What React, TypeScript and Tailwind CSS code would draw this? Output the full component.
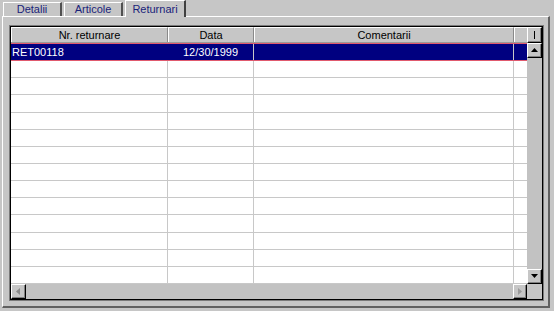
import React from 'react';

const rows = [
  { nr: 'RET00118', data: '12/30/1999', com: '' },
  ...Array.from({ length: 13 }, () => ({ nr: '', data: '', com: '' })),
];

// raised win98 style button face
function SysButton({ children, className = '' }: { children?: React.ReactNode; className?: string }) {
  return (
    <div className={`border-t border-l border-white border-r border-b border-r-black border-b-black bg-[#c6c6c6] ${className}`}>
      <div className="w-full h-full border-r border-b border-[#808080] flex items-center justify-center">
        {children}
      </div>
    </div>
  );
}

function Tab({ label, active }: { label: string; active?: boolean }) {
  if (active) {
    return (
      <div className="relative z-10 -mb-px h-[17px] w-[61px] bg-[#c6c6c6] border-t border-l border-white border-r-2 border-r-[#404040] flex items-center justify-center text-[#1a237a]">
        {label}
      </div>
    );
  }
  return (
    <div className="h-[14px] w-[59px] bg-[#c6c6c6] border-t border-l border-white border-r-2 border-r-[#505050] flex items-center justify-center text-[#1a237a]">
      {label}
    </div>
  );
}

export default function App() {
  return (
    <div
      className="w-[554px] h-[311px] bg-[#c6c6c6] overflow-hidden text-[11px] leading-none"
      style={{ fontFamily: '"Liberation Sans", Arial, sans-serif' }}
    >
      {/* tab strip */}
      <div className="flex items-end h-[16px] pl-[3px] gap-[2px]">
        <Tab label="Detalii" />
        <Tab label="Articole" />
        <Tab label="Returnari" active />
      </div>

      {/* tab page */}
      <div className="ml-[2px] w-[548px] h-[292px] border-t border-l border-white border-r-2 border-b-2 border-r-[#606060] border-b-[#606060] pt-[8px] pl-[6px]">
        {/* grid frame */}
        <div className="w-[535px] h-[276px] border border-[#7a7a7a]">
          <div className="w-full h-full border border-black flex flex-col bg-[#c6c6c6]">
            <div className="flex h-[258px]">
              {/* table */}
              <div className="flex-1 flex flex-col bg-white">
                <div className="flex h-[16px] bg-[#c6c6c6] border-b border-[#9a9a9a] text-black">
                  <div className="w-[157px] border-l border-t border-white border-r border-r-[#8a8a8a] flex items-center justify-center">Nr. returnare</div>
                  <div className="w-[86px] border-l border-t border-white border-r border-r-[#8a8a8a] flex items-center justify-center">Data</div>
                  <div className="w-[260px] border-l border-t border-white border-r border-r-[#8a8a8a] flex items-center justify-center">Comentarii</div>
                  <div className="flex-1 border-l border-t border-white" />
                </div>
                {rows.map((r, i) => {
                  const sel = i === 0;
                  return (
                    <div
                      key={i}
                      className={`flex flex-1 ${sel ? 'bg-[#000080] text-white border-y border-[#e05a6e]' : 'border-b border-[#c8c8c8]'}`}
                    >
                      <div className={`w-[157px] border-r ${sel ? 'border-[#000080]' : 'border-[#c8c8c8]'} flex items-center pl-[1px]`}>{r.nr}</div>
                      <div className="w-[86px] border-r border-[#c8c8c8] flex items-center justify-center">{r.data}</div>
                      <div className="w-[260px] border-r border-[#c8c8c8] flex items-center">{r.com}</div>
                      <div className="flex-1" />
                    </div>
                  );
                })}
              </div>
              {/* vertical scrollbar */}
              <div className="w-[15px] flex flex-col bg-[#c6c6c6]">
                <SysButton className="h-[16px]">
                  <div className="w-[1px] h-[8px] bg-black" />
                </SysButton>
                <SysButton className="h-[15px]">
                  <svg width="7" height="4" viewBox="0 0 7 4"><path d="M3.5 0L7 4H0z" fill="#000" /></svg>
                </SysButton>
                <div className="flex-1 bg-[#c2c2c2]" />
                <SysButton className="h-[15px]">
                  <svg width="7" height="4" viewBox="0 0 7 4"><path d="M0 0h7L3.5 4z" fill="#000" /></svg>
                </SysButton>
              </div>
            </div>
            {/* horizontal scrollbar */}
            <div className="flex h-[15px]">
              <SysButton className="w-[15px]">
                <svg width="4" height="7" viewBox="0 0 4 7"><path d="M0 3.5L4 0v7z" fill="#8a8a8a" /></svg>
              </SysButton>
              <div className="flex-1 bg-[#c2c2c2]" />
              <SysButton className="w-[14px]">
                <svg width="4" height="7" viewBox="0 0 4 7"><path d="M4 3.5L0 0v7z" fill="#9a9a9a" /></svg>
              </SysButton>
              <div className="w-[15px] bg-[#c6c6c6]" />
            </div>
          </div>
        </div>
      </div>
    </div>
  );
}
